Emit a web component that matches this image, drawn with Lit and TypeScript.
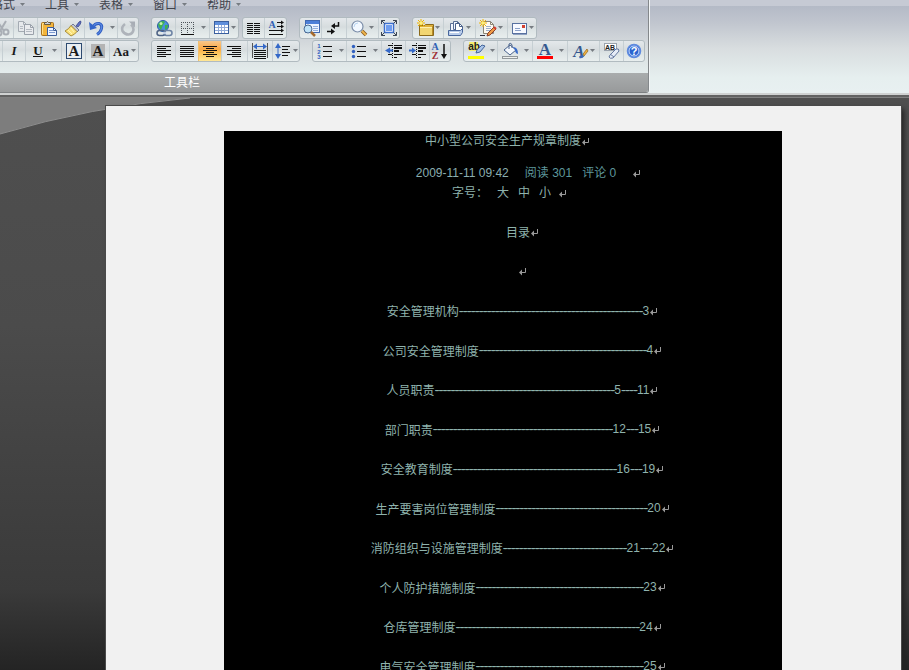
import { LitElement, html, svg, css, TemplateResult, SVGTemplateResult } from "lit";
import { customElement } from "lit/decorators.js";
import { classMap } from "lit/directives/class-map.js";
import { styleMap } from "lit/directives/style-map.js";

type Menu = "wide" | "tight";
interface Tool { icon: string; label: string; width: number; menu?: Menu; on?: boolean; }

const bars = (x: number, ws: [number, number][], y = 4, step = 2) =>
  ws.map(([o, w], i) => svg`<rect x=${x + o} y=${y + i * step} width=${w} height="1" fill="#111"/>`);

const sheet = (x: number, y: number, w: number, h: number, fill: string, edge: string) =>
  svg`<path d="M${x + 0.5} ${y + 0.5}h${w - 4}l3 3v${h - 4}h-${w - 1}z" fill=${fill} stroke=${edge}/><path d="M${x + w - 3.5} ${y + 0.5}v3h3" fill="none" stroke=${edge}/>`;

const spark = (x: number, y: number) =>
  svg`<g stroke="#f2b500" stroke-width="1"><path d="M${x - 4} ${y}h8M${x} ${y - 4}v8M${x - 3} ${y - 3}l6 6M${x + 3} ${y - 3}l-6 6"/></g><circle cx=${x} cy=${y} r="1.5" fill="#fff27a"/>`;

const ICONS: Record<string, SVGTemplateResult | SVGTemplateResult[]> = {
  cut: svg`<path d="M4 2l7 10M13 2L7 12" stroke="#a9aeb5" stroke-width="2" fill="none"/><circle cx="6" cy="14" r="2.5" fill="none" stroke="#a9aeb5" stroke-width="2"/><circle cx="13" cy="13" r="2.5" fill="none" stroke="#a9aeb5" stroke-width="2"/>`,
  copy: svg`${sheet(1, 2, 9, 11, "#e6e9ec", "#a4abb3")}${sheet(7, 5, 10, 11, "#e9ebee", "#9aa1aa")}<path d="M3 7.500h3M3 9.500h3M9 10.500h6M9 12.500h6" stroke="#b4bac1"/>`,
  paste: svg`<rect x="1.500" y="3.500" width="12" height="13" rx="1" fill="#f3b53c" stroke="#a8701a"/><path d="M2.500 15V4.500H6" fill="none" stroke="#ffe08a"/><path d="M4.500 5.500v-2h2q1-2 2 0h2v2z" fill="#c9ced8" stroke="#6b5a3a"/>${sheet(7, 8, 10, 9, "#eef4ff", "#3d5d99")}<path d="M9 11.500h4M9 13.500h6" stroke="#7c9ad0"/>`,
  brush: svg`<path d="M12 7l3-4q2-2 2 0t-3 5z" fill="#6070c8" stroke="#2d3b80" stroke-width=".7"/><path d="M9 5l6 6-2 2-6-6z" fill="#c4c8d6" stroke="#5b6285" stroke-width=".8"/><path d="M7 6.500l6 6q-2 3-6 4.500l-6-5q4-2 6-5.500z" fill="#fae17b" stroke="#a08228" stroke-width=".9"/><path d="M4 11l4 4M7 9l3 4" stroke="#fff6b8"/>`,
  undo: svg`<path d="M6 8q2-4 6-3.500 3.500 1 2.500 5-1 4-4.500 6" fill="none" stroke="#2e5cc0" stroke-width="3"/><path d="M6 8q2-4 6-3.500 3.500 1 2.500 5-1 4-4.500 6" fill="none" stroke="#5c8ae2" stroke-width="1.200"/><path d="M2 3l1 8 7-2z" fill="#3566c9"/>`,
  redo: svg`<path d="M6 5q-4 3-2.500 7 2 3.500 6 3.500 4.500-.5 5-5 0-3-2.500-5" fill="none" stroke="#aeb3ba" stroke-width="2.600"/><path d="M10 2.500h6v6z" fill="#a8adb5"/>`,
  bold: svg`<text x="9" y="14" class="g">B</text>`,
  italic: svg`<text x="9" y="13" class="g i">I</text>`,
  underline: svg`<text x="9" y="13" class="g">U</text><rect x="4" y="14" width="10" height="1" fill="#111"/>`,
  abox: svg`<rect x="1.500" y="1.500" width="15" height="15" fill="#e9eef2" stroke="#2d4a70"/><text x="9" y="14" class="g l">A</text>`,
  ashade: svg`<rect x="2" y="2" width="14" height="14" fill="#b4b4b4"/><text x="9" y="14" class="g l">A</text>`,
  aa: svg`<text x="9" y="14" class="g">Aa</text>`,
  globe: svg`<circle cx="8" cy="7" r="5.500" fill="#4a90e0" stroke="#2b5ba8"/><path d="M5 3q3-2 5 0l-2 3-2 5q-3-3-3-6zM10 6l3 0q0 4-3 5z" fill="#3fb050"/><circle cx="6" cy="4.500" r="1.500" fill="#c5f0b0"/><rect x="2" y="11.500" width="8" height="5" rx="2.500" fill="none" stroke="#4d6284" stroke-width="1.500"/><rect x="9" y="11.500" width="8" height="5" rx="2.500" fill="none" stroke="#6c82a4" stroke-width="1.500"/><path d="M7 14h5" stroke="#dbe5f3" stroke-width="1.500"/>`,
  grid: svg`<path d="M3 3.500h13M3 9.500h13M3.500 3v11M9.500 3v11M15.500 3v11" stroke="#4c5258" stroke-dasharray="1 1"/><rect x="3" y="15" width="13" height="1" fill="#111"/>`,
  table: svg`<rect x="2.500" y="2.500" width="14" height="12" fill="#fff" stroke="#3a5f9f"/><rect x="3" y="3" width="13" height="3" fill="#5f8fdc"/><path d="M3 8.500h13M3 11.500h13M6.500 6v8M9.500 6v8M12.500 6v8" stroke="#91abd8"/>`,
  columns: [0, 1, 2, 3, 4, 5].map(i => svg`<rect x="2" y=${4 + i * 2} width="6" height="1" fill="#111"/><rect x="9" y=${4 + i * 2} width="6" height="1" fill="#111"/>`),
  textdir: svg`<text x="5" y="9" class="g s blue">A</text><path d="M10 3.500h6M10 7.500h6M2 11.500h14M2 15.500h14" stroke="#111"/><path d="M14 1.500l3 2-3 2zM14 5.500l3 2-3 2zM14 9.500l3 2-3 2z" fill="#111"/>`,
  alignL: bars(2, [[0, 14], [0, 9], [0, 14], [0, 9], [0, 14], [0, 9]]),
  justify: bars(2, [[0, 14], [0, 14], [0, 14], [0, 14], [0, 14], [0, 14]]),
  alignC: bars(2, [[0, 14], [3, 8], [0, 14], [3, 8], [0, 14], [3, 8]]),
  alignR: bars(1, [[0, 14], [5, 9], [0, 14], [5, 9], [0, 14], [5, 9]]),
  distribute: svg`<path d="M1.500 1v15M16.500 1v15" stroke="#555"/><path d="M3 4.500h12" stroke="#3468c8"/><path d="M2 4.500l4-3v6zM16 4.500l-4-3v6z" fill="#3468c8"/>${bars(3, [[0, 12], [0, 12], [0, 12], [0, 12], [0, 12]], 8)}`,
  spacing: svg`<path d="M4 3v12" stroke="#3468c8"/><path d="M1 6l3-5 3 5zM1 12l3 5 3-5z" fill="#3468c8"/>${bars(8, [[0, 8], [0, 6], [0, 8], [0, 6]], 4, 3)}`,
  find: svg`<rect x="3.500" y="1.500" width="14" height="12" fill="#edf4ff" stroke="#4068b0"/><rect x="4" y="2" width="13" height="3" fill="#4c7fd8"/><path d="M11 7.500h5M11 9.500h5M11 11.500h5" stroke="#91aede"/><circle cx="6" cy="10" r="4" fill="#bfe3f8" stroke="#4a6a94"/><path d="M9 13l4 4" stroke="#a66b2e" stroke-width="2.500"/>`,
  marks: svg`<path d="M13.500 3v4H9M2 12.500h5" stroke="#111" stroke-width="1.500" fill="none"/><path d="M10 4v6L6 7zM6 9.500v6l4-3z" fill="#111"/>`,
  zoom: svg`<path d="M12 12l4 4" stroke="#8b5a1d" stroke-width="3.500"/><path d="M12 12l4 4" stroke="#efb64c" stroke-width="1.800"/><circle cx="7.500" cy="7.500" r="5.500" fill="#f2f8ff" stroke="#7b8da8" stroke-width="1.200"/><path d="M4 8q0-4 4-4" stroke="#b9d5f1" fill="none"/>`,
  fit: svg`<rect x="4.500" y="4.500" width="9" height="9" fill="#fff" stroke="#3c6fd0" stroke-width="1.500"/><rect x="6" y="6" width="6" height="6" fill="#6f9df0"/><path d="M1.500 5V1.500H5M13 1.500h3.500V5M16.500 13v3.500H13M5 16.500H1.500V13" fill="none" stroke="#3c4655"/><path d="M1.500 1.500l3 3M16.500 1.500l-3 3M16.500 16.500l-3-3M1.500 16.500l3-3" stroke="#3c4655"/>`,
  folder: svg`<path d="M3.500 6.500h5l1-1h8v11h-14z" fill="#e0b23c" stroke="#8b6a1b"/><path d="M4 8h12v8H4z" fill="#f2d672"/><path d="M4 8.500h12" stroke="#fff1b0"/><path d="M16.500 7v9" stroke="#b98c26"/>${spark(5, 4)}`,
  print: svg`${sheet(3, 4, 8, 9, "#f3f7ff", "#5a6f94")}${sheet(6, 2, 8, 9, "#f3f7ff", "#5a6f94")}${sheet(8, 4, 8, 9, "#fff", "#4a618a")}<path d="M1.500 11.500h12l2-2v4l-2 3h-12z" fill="#b9cdea" stroke="#46659c"/><path d="M3 13.500h9" stroke="#fff"/>`,
  edit: svg`${sheet(4, 2, 11, 13, "#fffaf0", "#8a8577")}<path d="M7 7.500h5M7 9.500h5M7 11.500h4" stroke="#9db0cc"/><path d="M15 8l2 2-6 6-3 1 1-3z" fill="#ee9c48" stroke="#8e3f26"/><path d="M15 8l2 2" stroke="#d13a30" stroke-width="2"/>${spark(4, 4)}<path d="M1 16.500h5" stroke="#334"/>`,
  mail: svg`<rect x="2.500" y="4.500" width="14" height="10" fill="#f7f9ff" stroke="#5871a0"/><path d="M3 15.500h14" stroke="#8fa1c1"/><rect x="12" y="6" width="3" height="3" fill="#d34132"/><path d="M5 9.500h5M5 11.500h6" stroke="#8aa0c8"/>`,
  numbers: svg`<text x="3" y="6" class="n">1</text><text x="3" y="12" class="n">2</text><text x="3" y="17" class="n">3</text><path d="M7 4.500h9M7 9.500h9M7 14.500h9" stroke="#111"/>`,
  bullets: svg`<path d="M7 4.500h9M7 9.500h9M7 14.500h9" stroke="#111"/><g fill="#3060c0"><circle cx="3.500" cy="4.500" r="1.700"/><circle cx="3.500" cy="9.500" r="1.700"/><circle cx="3.500" cy="14.500" r="1.700"/></g>`,
  outdent: svg`<path d="M3 3.500h4M9 3.500h8M9 6.500h8M9 9.500h5M3 12.500h4M9 12.500h8M9 15.500h3" stroke="#111"/><path d="M9 6h8M9 9h5" stroke="#111" stroke-width="2"/><path d="M7.500 1v16" stroke="#111" stroke-dasharray="1 1"/><path d="M0 8.500l5-3v2h3v2H5v2z" fill="#3468c8"/>`,
  indent: svg`<path d="M3 3.500h4M9 3.500h8M9 6.500h8M9 9.500h5M3 12.500h4M9 12.500h8M9 15.500h3" stroke="#111"/><path d="M9 6h8M9 9h5" stroke="#111" stroke-width="2"/><path d="M7.500 1v16" stroke="#111" stroke-dasharray="1 1"/><path d="M7 8.500l-4-3v2H0v2h3v2z" fill="#3468c8"/>`,
  sort: svg`<text x="4" y="8" class="g s blue">A</text><text x="4" y="17" class="g s red">Z</text><path d="M13 2v11" stroke="#111" stroke-width="1.500"/><path d="M10 12h6l-3 5z" fill="#111"/>`,
  highlight: svg`<rect x="2" y="0" width="9" height="9" fill="#f4ee70"/><text x="7" y="8" class="ab">ab</text><path d="M15 3l3 1-5 6-4 1 1-3z" fill="#a9c4e8" stroke="#44659b"/><rect x="1" y="14" width="16" height="3" fill="#ff0"/>`,
  bucket: svg`<path d="M3 8l6-5 6 5-6 5z" fill="#f4f8fd" stroke="#4a638c"/><path d="M8 7V2q2-2 3 1v3" fill="none" stroke="#4a638c"/><path d="M12 5q5 0 5 7-3-1-3-4z" fill="#3b6cc8"/><rect x="1.500" y="14.500" width="15" height="2" fill="#eef0ee" stroke="#92989b"/>`,
  color: svg`<text x="9" y="13" class="g xl navy">A</text><rect x="1" y="14" width="16" height="3" fill="#f00"/>`,
  style: svg`<text x="8" y="15" class="g i xl navy">A</text><path d="M12 12l4-5 1 2-4 5z" fill="#f2b43c" stroke="#8a5d1d" stroke-width=".7"/><path d="M8 16l2-3 3 1q-1 3-5 2z" fill="#3c68b8"/>`,
  erase: svg`<rect x="1.500" y="1.500" width="12" height="7" fill="#fff" stroke="#9aa3ad"/><text x="7" y="8" class="tiny">AB</text><path d="M7 13l6-6q3-1 3 2l-6 7q-3 1-4-1z" fill="#e6ecf6" stroke="#6478a0"/><path d="M7 12l4 3" stroke="#6478a0"/>`,
  help: svg`<circle cx="9" cy="9" r="6.500" fill="#2a63cf" stroke="#5f8ade" stroke-width="1.500"/><circle cx="9" cy="9" r="5" fill="none" stroke="#cfe0ff"/><text x="9" y="13" class="q">?</text>`,
};

const t = (icon: string, label: string, width: number, menu?: Menu, on = false): Tool => ({ icon, label, width, menu, on });

const ROW_ONE: Tool[][][] = [
  [[t("cut", "剪切", 23), t("copy", "复制", 24), t("paste", "粘贴", 23), t("brush", "格式刷", 24), t("undo", "撤消", 33, "wide"), t("redo", "恢复", 21)]],
  [[t("globe", "超链接", 23), t("grid", "边框", 34, "wide"), t("table", "表格", 29, "tight")],
   [t("columns", "分栏", 21), t("textdir", "文字方向", 22)]],
  [[t("find", "查找", 21), t("marks", "编辑标记", 25), t("zoom", "显示比例", 32, "tight"), t("fit", "整页", 21)]],
  [[t("folder", "新建", 30, "tight"), t("print", "打印", 32, "tight"), t("edit", "编辑", 32, "tight"), t("mail", "邮件", 29, "tight")]],
];

const ROW_TWO: Tool[][][] = [
  [[t("bold", "加粗", 23), t("italic", "倾斜", 23), t("underline", "下划线", 36, "wide"), t("abox", "字符边框", 24), t("ashade", "字符底纹", 24), t("aa", "更改大小写", 29, "tight")]],
  [[t("alignL", "左对齐", 23), t("justify", "两端对齐", 23), t("alignC", "居中", 23, undefined, true), t("alignR", "右对齐", 26), t("distribute", "分散对齐", 25), t("spacing", "行距", 27, "tight")]],
  [[t("numbers", "编号", 33, "wide"), t("bullets", "项目符号", 35, "wide"), t("outdent", "减少缩进量", 24), t("indent", "增加缩进量", 24), t("sort", "排序", 21)]],
  [[t("highlight", "突出显示", 33, "wide"), t("bucket", "底纹", 35, "wide"), t("color", "字体颜色", 35, "wide"), t("style", "样式", 32, "tight"), t("erase", "清除格式", 24), t("help", "帮助", 21)]],
];

const arrow = html`<svg class="arrow" viewBox="0 0 7 4" aria-hidden="true"><path d="M1 0h5L3.500 3z"/></svg>`;
const mark = html`<svg class="mark" viewBox="0 0 8 8" aria-hidden="true"><path d="M7.500 1v4.500H2" fill="none" stroke="#9a9a9a"/><path d="M1 5.500l3-3v6z" fill="#9a9a9a"/></svg>`;

@customElement("tool-bar-row")
export class ToolBarRow extends LitElement {
  static properties = { clusters: { attribute: false } };
  declare clusters: Tool[][][];

  static styles = css`
    :host { display: flex; gap: 12px; }
    .cluster { display: flex; gap: 3px; }
    .set {
      display: flex; height: 20px; border: 1px solid #b1bbc0; border-radius: 3px;
      background: linear-gradient(#e4e8eb, #d6dcde 45%, #dde4e5 60%, #e8eeee);
    }
    button {
      box-sizing: border-box; flex: none; display: flex; align-items: center; justify-content: center;
      height: 20px; margin: 0; padding: 0; border: 0; border-left: 1px solid #c6cfd3; background: none;
    }
    button:first-child { border-left-color: transparent; }
    button.wide { gap: 4px; }
    button.on { background: linear-gradient(#f8c78c, #fba944 40%, #fdc45c 60%, #ffe796); border-color: #f0c070; }
    .icon { width: 18px; height: 18px; flex: none; overflow: visible; }
    .arrow { width: 7px; height: 4px; flex: none; fill: #777c82; }
    text { text-anchor: middle; font-family: "Liberation Sans", sans-serif; }
    .g { font: bold 13px "Liberation Serif", serif; fill: #1a1a1a; }
    .i { font-style: italic; }
    .l { font-size: 15px; }
    .xl { font-size: 17px; }
    .s { font-size: 10px; }
    .blue { fill: #2f5fb4; }
    .navy { fill: #35588f; }
    .red { fill: #a03038; }
    .n { font-size: 6px; font-weight: bold; fill: #3060c0; }
    .ab { font-size: 10px; font-weight: bold; fill: #222; }
    .tiny { font-size: 7px; font-weight: bold; fill: #222; }
    .q { font-size: 11px; font-weight: bold; fill: #fff; }
  `;

  private tool(x: Tool): TemplateResult {
    return html`<button
      class=${classMap({ wide: x.menu === "wide", on: !!x.on })}
      style=${styleMap({ width: `${x.width}px` })}
      aria-label=${x.label}
    ><svg class="icon" viewBox="0 0 18 18" aria-hidden="true">${ICONS[x.icon]}</svg>${x.menu ? arrow : ""}</button>`;
  }

  render() {
    return this.clusters.map(c => html`<div class="cluster">${c.map(s => html`<div class="set">${s.map(x => this.tool(x))}</div>`)}</div>`);
  }
}

const MENUS = ["格式", "工具", "表格", "窗口", "帮助"];

const CONTENTS: [string, number, string][] = [
  ["安全管理机构", 46, "3"],
  ["公司安全管理制度", 42, "4"],
  ["人员职责", 45, "5----11"],
  ["部门职责", 45, "12---15"],
  ["安全教育制度", 41, "16---19"],
  ["生产要害岗位管理制度", 38, "20"],
  ["消防组织与设施管理制度", 31, "21---22"],
  ["个人防护措施制度", 42, "23"],
  ["仓库管理制度", 46, "24"],
  ["电气安全管理制度", 42, "25"],
];

// Runs of hyphens are drawn as an unbroken rule.
const joined = (s: string) =>
  s.split(/(-+)/).map(p => (p.startsWith("-") ? html`<span class="dash">${p}</span>` : p));

@customElement("app-root")
export class AppRoot extends LitElement {
  static styles = css`
    :host {
      display: flex; flex-direction: column; height: 100vh; overflow: hidden;
      font: 12px "Liberation Sans", "Noto Sans CJK SC", sans-serif;
    }
    .ribbon {
      display: flex; flex: none; overflow: hidden;
      background: linear-gradient(#c6cad4 0, #c6cad4 6px, #b4bac6 6px, #c0c5ce 22px, #d8dddf 48px, #e6efef 78px, #e8f0f1);
      border-bottom: 2px solid #cfd1d1;
    }
    .panel {
      flex: none; box-sizing: border-box; padding-right: 3px; border-right: 1px solid #84888b;
      border-bottom: 1px solid #7d8082; border-radius: 0 0 3px 0; box-shadow: 1px 0 #f2f5f6; overflow: hidden;
    }
    .menus { display: flex; height: 20px; margin: -5px 0 2px -9px; }
    .menus button {
      display: flex; align-items: center; gap: 4px; width: 54px; padding: 0; border: 0; background: none;
      font: inherit; line-height: 20px; color: #41434c; white-space: nowrap;
    }
    .arrow { width: 7px; height: 4px; flex: none; fill: #777c82; }
    .rows { display: grid; gap: 1px; }
    .one { margin-left: -11px; }
    .two { margin-left: -22px; }
    .caption {
      height: 19px; margin: 11px -3px 0 0; padding-left: 164px; line-height: 21px; color: #fff;
      background: linear-gradient(#a9acad, #989a9b);
    }
    .desk {
      position: relative; flex: 1; min-height: 0; overflow: hidden; padding: 9px 8px 0 106px;
      border-top: 2px solid #626262; box-shadow: inset 0 1px #808080;
      background: linear-gradient(#4f4f4f, #4b4b4b 40%, #3a3a3a 86%, #242424);
    }
    .swoosh { position: absolute; left: 0; top: 0; width: 200px; height: 38px; }
    .page {
      position: relative; padding: 25px 119px 40px 118px; background: #f1f1f1;
      box-shadow: 0 0 0 1px #4a4a4a, 3px 3px 5px #222;
    }
    .sheet { background: #000; color: #8fb3ad; padding-bottom: 40px; white-space: nowrap; }
    h1, p, ol { margin: 0; padding: 0; font-size: 12px; font-weight: normal; list-style: none; }
    h1, p { display: flex; justify-content: center; align-items: center; height: 20px; line-height: 20px; }
    h1 { padding-left: 8px; margin-bottom: 12px; }
    .meta { padding-left: 50px; gap: 10px; align-items: baseline; }
    .meta time { margin-right: 6px; color: #8aaeb0; }
    .count { color: #5e979c; }
    .meta .mark { margin-left: 6px; }
    .sizes { padding-left: 12px; gap: 9px; margin-bottom: 9px; }
    .sizes .mark { margin-left: -2px; }
    .toc { display: grid; grid-auto-rows: 39px 40px; padding-left: 38px; }
    .toc li { display: flex; justify-content: center; align-items: center; }
    .dash { text-shadow: 1px 0 currentColor; }
    a { color: inherit; text-decoration: none; }
    .mark { width: 8px; height: 8px; flex: none; overflow: visible; }
  `;

  render() {
    return html`
      <header class="ribbon">
        <div class="panel">
          <nav class="menus">${MENUS.map(m => html`<button>${m}${arrow}</button>`)}</nav>
          <div class="rows">
            <tool-bar-row class="one" .clusters=${ROW_ONE}></tool-bar-row>
            <tool-bar-row class="two" .clusters=${ROW_TWO}></tool-bar-row>
          </div>
          <div class="caption">工具栏</div>
        </div>
      </header>
      <main class="desk">
        <svg class="swoosh" viewBox="0 0 200 38" aria-hidden="true">
          <path d="M0 1H190Q90 10 0 37z" fill="#7d7d7d"/>
          <path d="M0 37Q90 10 190 1" fill="none" stroke="#8e8e8e"/>
        </svg>
        <article class="page">
          <div class="sheet">
            <h1>中小型公司安全生产规章制度${mark}</h1>
            <p class="meta"><time>2009-11-11 09:42</time><span class="count">阅读 301</span><span class="count">评论 0</span>${mark}</p>
            <p class="sizes"><span>字号：</span><a href="#l">大</a><a href="#m">中</a><a href="#s">小</a>${mark}</p>
            <ol class="toc">
              <li>目录${mark}</li>
              <li>${mark}</li>
              ${CONTENTS.map(([name, dashes, pages]) => html`<li>${name}${joined("-".repeat(dashes) + pages)}${mark}</li>`)}
            </ol>
          </div>
        </article>
      </main>
    `;
  }
}
